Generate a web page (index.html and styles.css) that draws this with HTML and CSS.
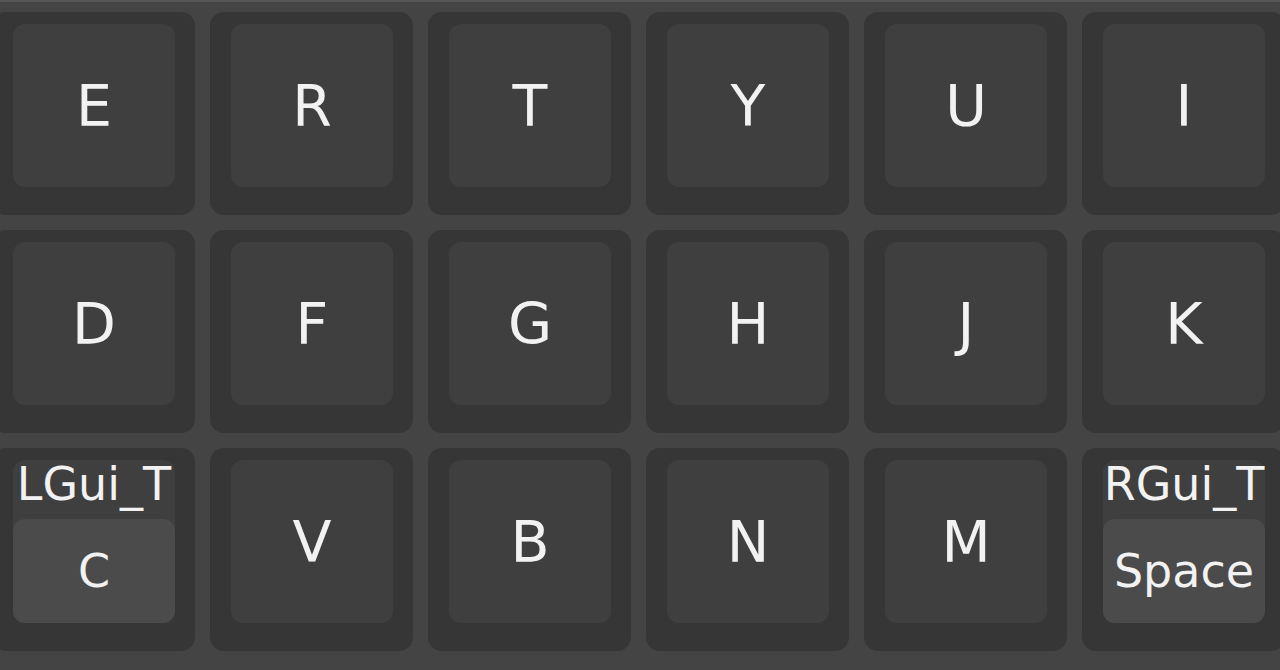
FILE: index.html
```html
<!DOCTYPE html>
<html>
<head>
<meta charset="utf-8">
<link rel="stylesheet" href="styles.css">
</head>
<body>
<div class="board">
  <div class="key"><div class="cap">E</div></div>
  <div class="key"><div class="cap">R</div></div>
  <div class="key"><div class="cap">T</div></div>
  <div class="key"><div class="cap">Y</div></div>
  <div class="key"><div class="cap">U</div></div>
  <div class="key"><div class="cap">I</div></div>

  <div class="key"><div class="cap">D</div></div>
  <div class="key"><div class="cap">F</div></div>
  <div class="key"><div class="cap">G</div></div>
  <div class="key"><div class="cap">H</div></div>
  <div class="key"><div class="cap">J</div></div>
  <div class="key"><div class="cap">K</div></div>

  <div class="key"><div class="cap hold"><div class="hold-label">LGui_T</div><div class="tap">C</div></div></div>
  <div class="key"><div class="cap">V</div></div>
  <div class="key"><div class="cap">B</div></div>
  <div class="key"><div class="cap">N</div></div>
  <div class="key"><div class="cap">M</div></div>
  <div class="key"><div class="cap hold"><div class="hold-label">RGui_T</div><div class="tap">Space</div></div></div>
</div>
</body>
</html>
```

FILE: styles.css
```css
html, body {
  margin: 0;
  padding: 0;
  background: #444444;
  width: 1280px;
  height: 670px;
  overflow: hidden;
}
body {
  border-top: 2px solid #565656;
  box-sizing: border-box;
  font-family: "DejaVu Sans", "Liberation Sans", sans-serif;
  color: #f2f2f2;
}
.board {
  display: grid;
  grid-template-columns: repeat(6, 203px);
  grid-auto-rows: 203px;
  gap: 15px;
  margin-left: -8px;
  padding-top: 10px;
}
.key {
  background: #363636;
  border-radius: 14px;
  padding: 12px 20px 28px 21px;
  box-sizing: border-box;
  display: flex;
}
.cap {
  flex: 1;
  background: #3f3f3f;
  border-radius: 12px;
  display: flex;
  align-items: center;
  justify-content: center;
  font-size: 57px;
}
.cap.hold {
  flex-direction: column;
  align-items: stretch;
  justify-content: flex-start;
  font-size: 46px;
}
.hold-label {
  height: 59px;
  line-height: 49px;
  text-align: center;
  white-space: nowrap;
}
.tap {
  flex: 1;
  background: #4b4b4b;
  border-radius: 12px;
  display: flex;
  align-items: center;
  justify-content: center;
}
```
